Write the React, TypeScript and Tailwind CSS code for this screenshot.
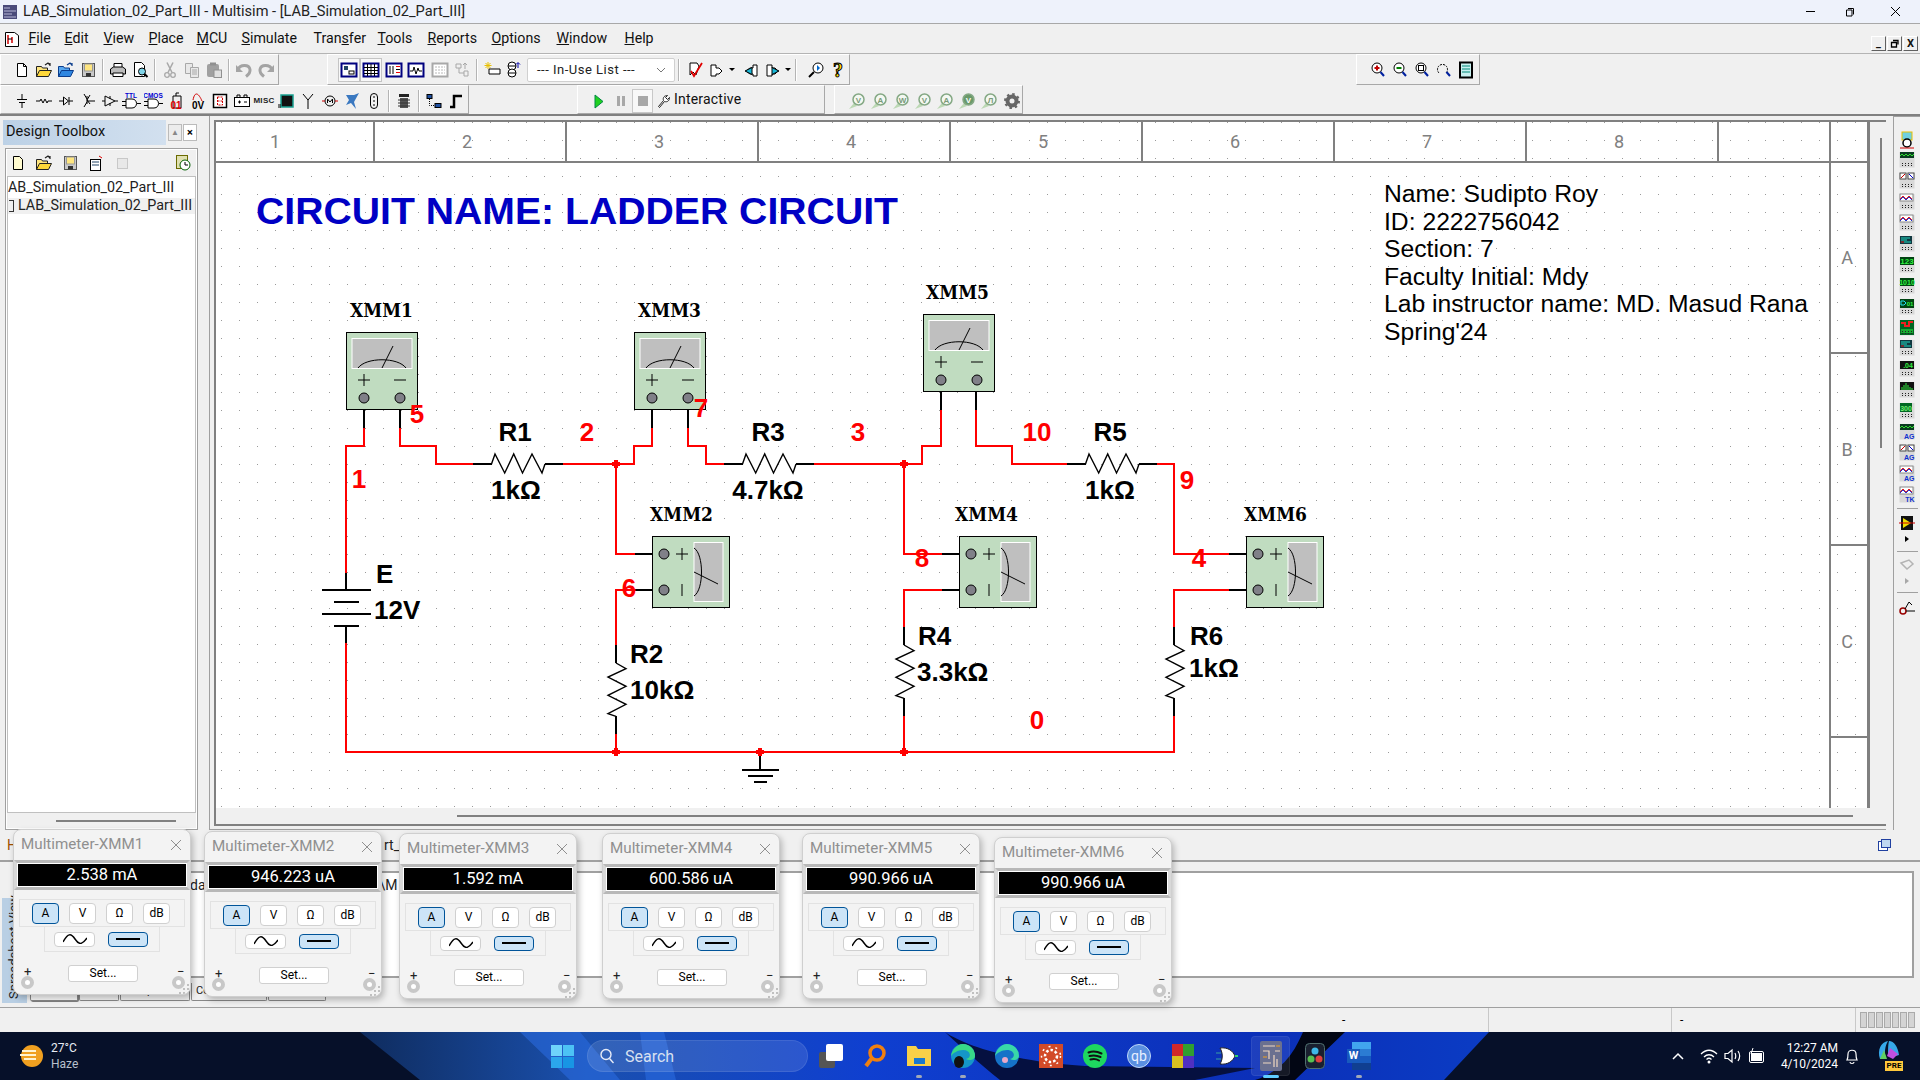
import React from 'react';

const F = "Liberation Sans";
const Svg = ({ children, w = 18, h = 18 }: { children?: React.ReactNode; w?: number; h?: number }) => (
  <svg width={w} height={h} viewBox={`0 0 ${w} ${h}`} className="block shrink-0">{children}</svg>
);
const Cell = ({ children, className = 'w-[22px]' }: { children?: React.ReactNode; className?: string }) => (
  <div className={`${className} h-[24px] flex items-center justify-center shrink-0`}>{children}</div>
);
const Sep = () => <div className="w-[2px] h-[22px] mx-[3px] bg-[#b4b4b4] border-r border-white shrink-0" />;
const Caret = () => <div className="w-[8px] flex justify-center shrink-0"><div className="w-0 h-0 border-x-[3px] border-x-transparent border-t-[3px] border-t-black" /></div>;
const panel = 'flex items-center border-t border-l border-white border-r border-r-[#a8a8a8] border-b border-b-[#a8a8a8] shrink-0';

const New = () => <Svg><path d="M4.5 2.5h6l3 3v10h-9z" fill="#fff" stroke="#000" /><path d="M10.5 2.5v3h3" fill="none" stroke="#000" /></Svg>;
const Folder = ({ a = '#ffe680', b = '#ffd83a', s = '#222' }: { a?: string; b?: string; s?: string }) => (
  <Svg><path d="M1.5 15.5v-10h5l1 1.5h5v8.500z" fill={a} stroke={s} /><path d="M1.500 15.500l3-6h12l-3 6z" fill={b} stroke={s} /><path d="M10 4l3-2 2 2M15 2v3" fill="none" stroke={s} strokeWidth="1.200" /></Svg>
);
const Save = () => <Svg><rect x="3.500" y="2.500" width="12" height="13" fill="#c8c8c8" stroke="#555" /><rect x="5.500" y="3" width="8" height="7" fill="#ffe680" stroke="#999" /><rect x="7" y="12" width="5" height="3.500" fill="#333" /></Svg>;
const Printer = () => <Svg><path d="M5 2.500h8v5H5z" fill="#fff" stroke="#000" /><path d="M1.500 8l3-2h9l3 2v5h-15z" fill="#bbb" stroke="#000" /><path d="M4 12h10v3.500H4z" fill="#fff" stroke="#000" /></Svg>;
const Preview = () => <Svg><path d="M3.500 1.500h7l3 3v11h-10z" fill="#fff" stroke="#000" /><circle cx="11" cy="10.500" r="3.500" fill="#7fd4e8" stroke="#000" /><path d="M13.500 13l3 3" stroke="#000" strokeWidth="2" /></Svg>;
const Cut = () => <Svg><path d="M6 1.500l5 10M12 1.500l-5 10" stroke="#a8a8a8" strokeWidth="1.500" fill="none" /><circle cx="6" cy="14" r="2.300" fill="none" stroke="#a8a8a8" strokeWidth="1.300" /><circle cx="12" cy="14" r="2.300" fill="none" stroke="#a8a8a8" strokeWidth="1.300" /></Svg>;
const Copy = () => <Svg><path d="M2.500 2.500h7v10h-7z" fill="#e8e8e8" stroke="#a8a8a8" /><path d="M7.500 6.500h8v10h-8z" fill="#e8e8e8" stroke="#a8a8a8" /><path d="M9 9h5M9 11h5M9 13h5" stroke="#a8a8a8" /></Svg>;
const Paste = () => <Svg><rect x="2" y="3" width="12" height="13" rx="2" fill="#a0a0a0" /><rect x="5" y="1.500" width="6" height="3" fill="#909090" /><rect x="9" y="9" width="7.500" height="7.500" fill="#e0e0e0" stroke="#909090" /></Svg>;
const Undo = ({ flip = false }: { flip?: boolean }) => (
  <Svg><g transform={flip ? 'matrix(-1 0 0 1 18 0)' : undefined}><path d="M3 8.500C5 3.500 14 3 15 8.500c.5 3-2 5.500-4 7" fill="none" stroke="#a4a4a4" strokeWidth="3" /><path d="M1 4v7h7z" fill="#a4a4a4" /></g></Svg>
);
const Box = ({ children, gray = false }: { children?: React.ReactNode; gray?: boolean }) => (
  <Svg><rect x="1.500" y="2.500" width="15" height="13" fill="#fff" stroke={gray ? '#a8a8a8' : '#00007f'} strokeWidth="2" />{children}</Svg>
);

const TopTool1 = () => (
  <div className={`${panel} w-[279px] h-[31px] pl-[10px] bg-[#f0f0f0]`}>
    <Cell><New /></Cell><Cell><Folder /></Cell><Cell><Folder a="#58a8f0" b="#2e86e0" s="#0a3c8c" /></Cell><Cell><Save /></Cell>
    <Sep />
    <Cell><Printer /></Cell><Cell><Preview /></Cell>
    <Sep />
    <Cell><Cut /></Cell><Cell><Copy /></Cell><Cell><Paste /></Cell>
    <Sep />
    <Cell><Undo /></Cell><Cell><Undo flip /></Cell>
  </div>
);

const TopTool2 = () => (
  <div className={`${panel} ml-[48px] w-[523px] h-[31px] pl-[10px] bg-[#f0f0f0]`}>
    <div className="w-[22px] h-[24px] flex items-center justify-center bg-[#f8f8f8] border border-[#c4c4c4] shrink-0"><Box><rect x="4" y="5" width="4" height="4" fill="#246" /><rect x="9" y="10" width="5" height="3" fill="#fff" stroke="#000" /></Box></div>
    <div className="w-[22px] h-[24px] flex items-center justify-center bg-[#f8f8f8] border border-[#c4c4c4] shrink-0"><Box><path d="M2 6.500h14M2 9.500h14M2 12.500h14M5.500 3v12M9 3v12M12.500 3v12" stroke="#000" /></Box></div>
    <div className="w-[1px] shrink-0" />
    <Cell><Box><path d="M5 5v8M8 5v8M11 5.500h4M11 8.500h4M11 11.500h4" stroke="#000" /><path d="M11 5.500h4M11 11.500h4" stroke="#e00" /></Box></Cell>
    <Cell><Box><path d="M3 10h3l1-4 2 7 2-6 1 3h3" stroke="#000" fill="none" /></Box></Cell>
    <div className="w-[2px] shrink-0" />
    <Cell><Box gray><path d="M4 6h10M4 9h10M4 12h10" stroke="#b8b8b8" strokeDasharray="2 1" /></Box></Cell>
    <Cell><Svg><path d="M3 3h5v4H3zM11 10h4v5h-4zM6 7v5h5M12 2v6M14 4l-2-2-2 2" fill="none" stroke="#a8a8a8" /></Svg></Cell>
    <Sep />
    <Cell><Svg><path d="M6 8h11v5H6z" fill="#fff" stroke="#000" /><path d="M5 1v7M1.500 4.500h7M2.500 2l5 5M7.500 2l-5 5" stroke="#e8c000" /></Svg></Cell>
    <Cell><Svg><circle cx="7" cy="5" r="4" fill="#fff" stroke="#000" /><circle cx="7" cy="12" r="4" fill="#fff" stroke="#000" /><path d="M3 5h8M3 12h8" stroke="#000" /><path d="M13 7V2M11 3.500l2-2 2 2" stroke="#00a" fill="none" /></Svg></Cell>
    <div className="w-[148px] h-[24px] ml-[2px] bg-white border border-[#d0d0d0] rounded-[2px] flex items-center pl-[9px] pr-[8px] justify-between shrink-0 text-[13px] tracking-[0.5px] text-[#222]">
      <span>--- In-Use List ---</span>
      <svg width="10" height="6" viewBox="0 0 10 6"><path d="M1 1l4 4 4-4" fill="none" stroke="#777" /></svg>
    </div>
    <Sep />
    <div className="w-[1px] shrink-0" />
    <Cell><Svg><path d="M4 2h7l2 3-3 9-3-3-3 3z" fill="#fff" stroke="#000" /><path d="M5 10l3 5 8-13" stroke="#e00000" strokeWidth="1.800" fill="none" /></Svg></Cell>
    <Cell><Svg><path d="M3 4h5v3h3l3 3-3 3H8v2H3z" fill="#fff" stroke="#000" /></Svg></Cell>
    <Caret />
    <div className="w-[4px] shrink-0" />
    <Cell><Svg><path d="M15 4h-4v3H8L4 10l4 3h3v2h4z" fill="#fff" stroke="#000" /><path d="M10 6.500L3 10l7 3.500z" fill="#18b8d8" stroke="#000" /></Svg></Cell>
    <Cell><Svg><path d="M3 4h5v3h3l3 3-3 3H8v2H3z" fill="#fff" stroke="#000" /><path d="M8 6.500l7 3.500-7 3.500z" fill="#18b8d8" stroke="#000" /></Svg></Cell>
    <Caret />
    <Sep />
    <div className="w-[5px] shrink-0" />
    <Cell><Svg><circle cx="11" cy="7" r="5" fill="#fff" stroke="#000" /><path d="M10 4l3 3-3 3z" fill="#06c" /><path d="M7 11l-5 5" stroke="#000" strokeWidth="2" /></Svg></Cell>
    <Cell><span className="font-['Liberation_Serif'] font-bold text-[20px] leading-none text-[#ffe000] [-webkit-text-stroke:1px_#000]">?</span></Cell>
  </div>
);

const Zoomer = ({ kind }: { kind: string }) => (
  <Svg>
    <circle cx="8" cy="7" r="5" fill="#fff" stroke="#000" />
    {kind === 'p' && <path d="M5.500 7h5M8 4.500v5" stroke="#c00000" strokeWidth="2" />}
    {kind === 'm' && <path d="M5.500 7h5" stroke="#008000" strokeWidth="2" />}
    {kind === 'a' && <rect x="5.500" y="4.500" width="5" height="5" fill="none" stroke="#000" />}
    <path d="M11.500 11l3.500 4" stroke="#00209f" strokeWidth="2" />
  </Svg>
);

const ZoomTool = () => (
  <div className={`${panel} ml-[506px] w-[124px] h-[31px] pl-[10px] bg-[#f0f0f0]`}>
    <Cell><Zoomer kind="p" /></Cell><Cell><Zoomer kind="m" /></Cell><Cell><Zoomer kind="a" /></Cell>
    <Cell><Svg><path d="M4 12A5 5 0 1 1 11 12" fill="none" stroke="#000" strokeDasharray="2 1" /><path d="M11.500 11l3.500 4" stroke="#00209f" strokeWidth="2" /></Svg></Cell>
    <Cell><Svg><rect x="3" y="1.500" width="12" height="15" fill="#c8f0f0" stroke="#000" strokeWidth="2" /><path d="M5 5h8M5 8h8M5 11h8" stroke="#087" /></Svg></Cell>
  </div>
);

const Stroke = ({ children }: { children?: React.ReactNode }) => <Svg><g fill="none" stroke="#000">{children}</g></Svg>;
const Gate = ({ label, color = '#0000d0' }: { label: string; color?: string }) => (
  <Svg w={20} h={18}>
    <text x="9" y="5.500" fontSize="6.500" fontWeight="700" fontFamily={F} fill={color} textAnchor="middle">{label}</text>
    <path d="M4 7h6c6 0 6 9 0 9H4zM0 9.500h4M0 13.500h4M15 11.500h4" fill="#fff" stroke="#000" />
  </Svg>
);
const Analysis = ({ t, k = 'l' }: { t: string; k?: string }) => (
  <Svg w={20} h={18}>
    <path d="M1 17l5-6 3 3z" fill="#bcd8b4" />
    <circle cx="10.500" cy="7.500" r={5.500} fill={k === 'd' ? '#6a9a6a' : '#f4f8f2'} stroke="#84a884" strokeWidth="1.500" />
    <text x="10.500" y="10.500" textAnchor="middle" fontSize="8" fontWeight="700" fontFamily={F} fill={k === 'd' ? '#fff' : '#7a9a7a'}>{t}</text>
  </Svg>
);

const BottomTools = () => (
  <div className="flex h-[31px] border-b-2 border-b-[#808080] shrink-0">
    <div className={`${panel} w-[469px] h-[29px] pl-[10px] pt-[2px]`}>
      <Cell><Stroke><path d="M9 2v5M4 7.500h10M6 10.500h6M9 11v5" /></Stroke></Cell>
      <Cell><Stroke><path d="M1 9h4l1-2 2 4 2-4 2 4 1-2h4" /></Stroke></Cell>
      <Cell><Stroke><path d="M2 9h4M12 9h4M6.500 5v8l5-4zM12 5v8" /></Stroke></Cell>
      <Cell><Stroke><path d="M5 2l3 5M8 4v8M5 15l3-5M11 3l-3 5 3 4M8 9h8" /></Stroke></Cell>
      <Cell><Stroke><path d="M1 9h3M14 9h3M4 4v10l10-5zM9 4v3M9 11v3" /></Stroke></Cell>
      <Cell><Gate label="TTL" /></Cell>
      <Cell><Gate label="CMOS" /></Cell>
      <Cell><Svg><path d="M6 4h8v12H6zM9 4V1h3" fill="none" stroke="#000" /><text x="9" y="16.500" fontSize="10" fontWeight="700" fontFamily={F} fill="#e00000" textAnchor="middle">01</text></Svg></Cell>
      <Cell><Svg><path d="M4 8c2-10 6-6 9 1" fill="none" stroke="#d00000" /><text x="9" y="17" fontSize="10" fontWeight="700" fontFamily={F} fill="#000" textAnchor="middle">0V</text></Svg></Cell>
      <Cell><Svg><rect x="2.500" y="2.500" width="13" height="13" fill="#fff" stroke="#000" strokeWidth="1.500" /><path d="M6.500 5h5v8h-5zM6.500 9h5" fill="none" stroke="#d00000" strokeDasharray="2 1" /></Svg></Cell>
      <Cell><Svg><rect x="1.500" y="5.500" width="15" height="9" fill="#fff" stroke="#000" /><path d="M4 5V3h3v2M11 5V3h3v2M5 10h3M6.500 8.500v3M11 10h3" fill="none" stroke="#000" /></Svg></Cell>
      <Cell><span className="text-[8px] font-bold tracking-[0.3px] leading-none text-[#222] font-['Liberation_Sans']">MISC</span></Cell>
      <Cell><Svg><rect x="4" y="3" width="12" height="12" fill="#111" stroke="#18a090" strokeWidth="1.500" /><path d="M1 13h3M1 15h3" stroke="#000" /></Svg></Cell>
      <Cell><Stroke><path d="M9 8v9M9 8L4 2M9 8l5-6" /></Stroke></Cell>
      <Cell><Stroke><circle cx="9" cy="9" r="5" /><path d="M6.500 11V7l2.500 3 2.500-3v4" /><path d="M1 9h3M14 9h3" stroke="#c00" /></Stroke></Cell>
      <Cell><Svg><path d="M3 3h8l5-2-5 9 2 7-5-6-5 2 3-5z" fill="#3a78c0" /></Svg></Cell>
      <Cell><Stroke><rect x="5.500" y="1.500" width="7" height="15" rx="3.500" /><path d="M9 4v10" strokeDasharray="2 2" /></Stroke></Cell>
      <Sep />
      <Cell><Svg><rect x="5" y="6" width="8" height="10" fill="#555" /><path d="M3 8h12M3 11h12M3 14h12" stroke="#333" /><rect x="4" y="2" width="10" height="3" fill="#222" /></Svg></Cell>
      <Sep />
      <Cell><Svg><rect x="2" y="2.500" width="5" height="4" fill="#2050a0" stroke="#000" /><rect x="10" y="11.500" width="6" height="4" fill="#2050a0" stroke="#000" /><path d="M4.500 7v6.500H10" stroke="#000" strokeDasharray="1 1" fill="none" /></Svg></Cell>
      <Cell><Svg><path d="M3 15h4V4h8" fill="none" stroke="#000" strokeWidth="2.500" /></Svg></Cell>
    </div>
    <div className={`${panel} ml-[108px] w-[248px] h-[29px] pl-[10px] pt-[2px]`}>
      <Cell><Svg><path d="M5 3v13l8-6.500z" fill="#20d020" stroke="#084" /></Svg></Cell>
      <Cell><div className="flex gap-[2px]"><div className="w-[3px] h-[10px] bg-[#a8a8a8]" /><div className="w-[3px] h-[10px] bg-[#a8a8a8]" /></div></Cell>
      <div className="w-[21px] h-[24px] flex items-center justify-center border border-[#c8c8c8] bg-[#f8f8f8] shrink-0"><div className="w-[10px] h-[10px] bg-[#a8a8a8]" /></div>
      <div className="w-[2px]" />
      <Cell className="w-[18px]"><Svg w={14} h={14}><path d="M1.500 12.500l5-6c-1-3 1-5 4-5l-2 2 2 2 2-2c0 3-2 5-5 4l-5 6z" fill="#fff" stroke="#222" /></Svg></Cell>
      <span className="text-[14px] text-[#111] ml-[1px] -mt-[2px] tracking-[0.2px]">Interactive</span>
    </div>
    <div className={`${panel} ml-[9px] w-[189px] h-[29px] pl-[12px] pt-[2px]`}>
      <Cell><Analysis t="V" /></Cell><Cell><Analysis t="A" /></Cell><Cell><Analysis t="W" /></Cell>
      <Cell><Analysis t="V" /></Cell><Cell><Analysis t="A" /></Cell><Cell><Analysis t="V" k="d" /></Cell>
      <Cell><Analysis t="Л" /></Cell>
      <Cell><Svg><circle cx="9" cy="9" r="4.500" fill="none" stroke="#666" strokeWidth="4" /><circle cx="9" cy="9" r="7" fill="none" stroke="#666" strokeWidth="2" strokeDasharray="2.500 3" /></Svg></Cell>
    </div>
  </div>
);

const menus: [string, string, string, string][] = [
  ['', 'F', 'ile', 'w-[36px]'], ['', 'E', 'dit', 'w-[39px]'], ['', 'V', 'iew', 'w-[45px]'], ['', 'P', 'lace', 'w-[48px]'], ['', 'M', 'CU', 'w-[45px]'],
  ['', 'S', 'imulate', 'w-[72px]'], ['Tran', 's', 'fer', 'w-[64px]'], ['', 'T', 'ools', 'w-[50px]'], ['', 'R', 'eports', 'w-[64px]'], ['', 'O', 'ptions', 'w-[65px]'], ['', 'W', 'indow', 'w-[68px]'], ['', 'H', 'elp', 'w-[40px]'],
];

const MenuBar = () => (
  <div className="h-[30px] flex items-center bg-[#f0f0f0] border-b border-b-[#b4b4b4] pl-[4px] text-[14.200px] text-[#111] shrink-0">
    <div className="w-[24.500px] shrink-0"><Svg w={16} h={18}><path d="M1.500 2.500h9l4 3v11h-13z" fill="#fff" stroke="#000" /><path d="M4 5v9M8 7v6" stroke="#d00000" strokeWidth="1.500" /><path d="M4 9h4" stroke="#000" /></Svg></div>
    {menus.map(([a, b, c, w]) => (
      <div key={b + c} className={`${w} shrink-0`}>{a}<span className="underline">{b}</span>{c}</div>
    ))}
    <div className="ml-auto flex gap-[1px] pr-[2px] pt-[10px]">
      {['_', '', 'X'].map((t, i) => (
        <div key={i} className="w-[15px] h-[15px] border border-t-white border-l-white border-b-[#606060] border-r-[#606060] flex items-center justify-center text-[11px] font-bold leading-none bg-[#f0f0f0]">
          {t === '' ? <Svg w={9} h={9}><path d="M3 1.500h5v4M1.500 3.500h5v4.500h-5z" fill="none" stroke="#000" strokeWidth="1.300" /></Svg> : t}
        </div>
      ))}
    </div>
  </div>
);

const instY = ['wave', 'two', 'red', 'red', 'mix', '123', '1010', 'gate', 'logic', 'mix', 'num', 'bars', 'num2', 'wave', 'two', 'red', 'red'];
const Inst = ({ t, i }: { t: string; i: number }) => {
  const tail = i === 13 || i === 14 || i === 15 ? 'AG' : i === 16 ? 'TK' : '';
  return (
    <Svg w={16} h={18}>
      <rect x="0.500" y="1" width="15" height="15.500" fill="#d8d8d8" />
      {t === 'wave' && <><rect x="1" y="1" width="14" height="6" fill="#0a3a20" /><path d="M1 5l2-2 2 2 2-2 2 2 2-2 2 2 2-2" stroke="#30e030" fill="none" /></>}
      {t === 'two' && <><rect x="1" y="1" width="6" height="6" fill="#fff" stroke="#444" /><rect x="9" y="1" width="6" height="6" fill="#fff" stroke="#444" /><path d="M2 6l4-4" stroke="#c00" /><path d="M10 2l4 4" stroke="#00c" /></>}
      {t === 'red' && <><rect x="1" y="1" width="13" height="7" fill="#fff" stroke="#888" /><path d="M1 6l3-3 3 3 3-3 3 3" stroke="#e02020" fill="none" /><path d="M1 7l3-3 3 3 3-3 3 3" stroke="#2030d0" fill="none" /></>}
      {t === 'mix' && <><rect x="1" y="1" width="12" height="8" fill="#103840" /><path d="M2 3h9M2 5h6M5 7h7" stroke="#20d8c0" /><path d="M2 7h3" stroke="#e02020" /></>}
      {t === '123' && <><rect x="1" y="1" width="14" height="8" fill="#041" /><text x="8" y="8" textAnchor="middle" fontSize="8" fontWeight="700" fontFamily={F} fill="#30f040">123</text></>}
      {t === '1010' && <><rect x="1" y="1" width="14" height="8" fill="#041" /><text x="8" y="8" textAnchor="middle" fontSize="7" fontWeight="700" fontFamily={F} fill="#30f040">1010</text></>}
      {t === 'gate' && <><rect x="1" y="1" width="14" height="9" fill="#041" /><path d="M2 3h3l2 2-2 2H2z" fill="none" stroke="#20e0f0" /><text x="11" y="8" textAnchor="middle" fontSize="6" fontWeight="700" fontFamily={F} fill="#30f040">01</text></>}
      {t === 'logic' && <><rect x="1" y="1" width="14" height="15" fill="#062" /><path d="M2 4h4v3h4V3h4" stroke="#f02020" strokeWidth="2" fill="none" /><path d="M2 11h12M2 13h12" stroke="#30f040" /></>}
      {t === 'num' && <><rect x="1" y="1" width="14" height="8" fill="#111" /><text x="9" y="8" textAnchor="middle" fontSize="7" fontWeight="700" fontFamily={F} fill="#30f040">.04</text></>}
      {t === 'bars' && <><rect x="1" y="1" width="14" height="8" fill="#111" /><path d="M3 9V6M5 9V4M7 9V2M9 9V4M11 9V6M13 9V7" stroke="#30f040" /></>}
      {t === 'num2' && <><rect x="1" y="1" width="12" height="9" fill="#062" /><text x="7" y="8.500" textAnchor="middle" fontSize="7" fontWeight="700" fontFamily={F} fill="#70f070">300</text></>}
      {tail
        ? <text x="15.500" y="16" textAnchor="end" fontSize="7" fontWeight="700" fontFamily={F} fill="#1030d0">{tail}</text>
        : <path d="M3 12.500h1M6 12.500h1M9 12.500h1M12 12.500h1M3 14.500h1M6 14.500h1M9 14.500h1M12 14.500h1" stroke="#222" />}
    </Svg>
  );
};

const RightTools = () => (
  <div className="w-[27px] ml-[7px] border-l border-t border-l-[#a0a0a0] border-t-[#a0a0a0] flex flex-col items-center pt-[12px] shrink-0">
    <div className="h-[21px] flex items-center shrink-0"><Svg w={16} h={18}><rect x="3" y="1" width="10" height="8" fill="#70d0e0" stroke="#e8c000" /><circle cx="8" cy="12" r="4" fill="#fff" stroke="#000" strokeWidth="1.500" /><path d="M1 17h14" stroke="#d00000" /></Svg></div>
    {instY.map((t, i) => <div key={i} className="h-[20.900px] flex items-center shrink-0"><Inst t={t} i={i} /></div>)}
    <div className="w-[21px] h-[1px] bg-[#a0a0a0] mt-[3px] shrink-0" />
    <div className="h-[27px] flex items-center shrink-0"><Svg w={16} h={16}><rect x="2" y="1" width="12" height="14" fill="#111" /><path d="M4 3l8 5-8 5z" fill="#f0e000" /><path d="M0 8h16" stroke="#c00" /></Svg></div>
    <div className="w-0 h-0 border-y-[3px] border-y-transparent border-l-[4px] border-l-black" />
    <div className="w-[21px] h-[1px] bg-[#a0a0a0] mt-[9px] shrink-0" />
    <div className="h-[26px] flex items-center shrink-0"><Svg w={16} h={16}><path d="M2 6l8-3 4 4-6 5z" fill="none" stroke="#b4b4b4" strokeWidth="1.500" /></Svg></div>
    <div className="w-0 h-0 border-y-[3px] border-y-transparent border-l-[4px] border-l-[#a8a8a8]" />
    <div className="w-[21px] h-[1px] bg-[#a0a0a0] mt-[8px] shrink-0" />
    <div className="h-[28px] flex items-center shrink-0"><Svg w={16} h={16}><circle cx="4" cy="12" r="3" fill="none" stroke="#900" strokeWidth="1.500" /><path d="M6 10l4-7 3 3M7 12h9" fill="none" stroke="#000" /></Svg></div>
  </div>
);

const LeftPanel = () => (
  <div className="w-[209px] shrink-0 flex flex-col pt-[4px] pl-[3px] pr-[11px]">
    <div className="flex items-center h-[25px] shrink-0">
      <div className="w-[163px] h-[25px] bg-gradient-to-r from-[#bcd1e6] to-[#d2e0ef] flex items-center pl-[3px] pb-[2px] text-[14.500px] text-[#111]">Design Toolbox</div>
      <div className="w-[14px] h-[17px] ml-[2px] border border-[#bbb] bg-[#ececec] text-[8px] text-[#888] flex items-center justify-center">▲</div>
      <div className="w-[14px] h-[17px] ml-[1px] border border-[#bbb] bg-white text-[11px] font-bold flex items-center justify-center leading-none">×</div>
    </div>
    <div className="ml-[2px] mt-[3px] h-[684px] border border-[#a0a0a0] shadow-[inset_0_0_0_1px_#fff] flex flex-col">
      <div className="h-[27px] flex items-center pl-[3px] gap-[8px] shrink-0">
        <Svg><path d="M4.500 2.500h6l3 3v10h-9z" fill="#fffbd0" stroke="#000" /></Svg>
        <Folder />
        <Save />
        <Svg><rect x="3.500" y="5.500" width="10" height="11" fill="#fff" stroke="#000" /><path d="M5 8h7M5 11h7" stroke="#246" /><path d="M12 2l3 2" stroke="#d00" /></Svg>
        <Svg><rect x="4.500" y="4.500" width="10" height="10" fill="#e8e8e8" stroke="#c8c8c8" /></Svg>
        <div className="ml-[35px]"><Svg><rect x="2.500" y="1.500" width="11" height="13" fill="#e0e0b0" stroke="#6a6a00" /><circle cx="11" cy="11" r="5" fill="#fff" stroke="#006000" /><path d="M11 8v3h3" fill="none" stroke="#000" /></Svg></div>
      </div>
      <div className="mx-[1px] h-[637px] bg-white border border-[#c0c0c0] overflow-hidden text-[14.300px] text-[#222] shrink-0">
        <div className="h-[20px] pt-[1px] flex items-center whitespace-nowrap">AB_Simulation_02_Part_III</div>
        <div className="h-[16px] mt-[1px] bg-[#f0f0f0] flex items-center whitespace-nowrap pl-[1px]"><span className="w-[5px] h-[12px] border border-[#333] border-l-0 mr-[4px]" />LAB_Simulation_02_Part_III</div>
      </div>
      <div className="flex-1 flex items-center pl-[50px]"><div className="w-[120px] h-[2px] bg-[#808080]" /></div>
    </div>
  </div>
);

const dotPath = (() => {
  let d = '';
  for (let i = 0; i < 94; i++) {
    for (let j = 0; j < 40; j++) {
      const x = Math.round(220.9 + i * 17.96);
      const y = Math.round(122.3 + 18 * j);
      d += `M${x} ${y}h1v1h-1z`;
    }
  }
  return d;
})();

const W = ({ p }: { p: string }) => <polyline points={p} fill="none" stroke="#ff0000" strokeWidth="2" shapeRendering="crispEdges" />;
const K = ({ p }: { p: string }) => <polyline points={p} fill="none" stroke="#000" strokeWidth="2" shapeRendering="crispEdges" />;
const RH = ({ x, y }: { x: number; y: number }) => {
  const o = [[18.5, 0], [22, -10], [31.7, 9], [40.7, -10], [49.5, 9], [59, -10], [69, 9], [72, 0]];
  return <>
    <K p={`${x},${y} ${x + 19},${y}`} />
    <polyline points={o.map(([a, b]) => `${x + a},${y + b}`).join(' ')} fill="none" stroke="#000" strokeWidth="1.400" />
    <K p={`${x + 72},${y} ${x + 90},${y}`} />
  </>;
};
const RV = ({ x, y }: { x: number; y: number }) => {
  const o = [[0, 18], [10, 23.600], [-8, 32], [10, 41.300], [-8, 50.300], [10, 59.300], [-8, 68.600], [0, 71.300]];
  return <>
    <K p={`${x},${y} ${x},${y + 18}`} />
    <polyline points={o.map(([a, b]) => `${x + a},${y + b}`).join(' ')} fill="none" stroke="#000" strokeWidth="1.400" />
    <K p={`${x},${y + 71} ${x},${y + 89}`} />
  </>;
};
const Term = ({ x, y }: { x: number; y: number }) => <circle cx={x} cy={y} r="5" fill="#808088" stroke="#000" strokeWidth="1" />;
const MV = ({ x, y }: { x: number; y: number }) => (
  <>
    <rect x={x + 0.5} y={y + 0.5} width="71" height="77" fill="#c0dcc0" stroke="#000" />
    <rect x={x + 6} y={y + 6.5} width="60" height="30" fill="#bfbfbf" stroke="#fff" />
    <path d={`M${x + 12} ${y + 36}C${x + 20} ${y + 25} ${x + 52} ${y + 25} ${x + 60} ${y + 36}M${x + 36} ${y + 36}L${x + 47} ${y + 14}`} fill="none" stroke="#000" />
    <path d={`M${x + 12} ${y + 48}h12M${x + 18} ${y + 42}v12M${x + 48} ${y + 48}h12`} stroke="#000" />
    <Term x={x + 18} y={y + 66} /><Term x={x + 54} y={y + 66} />
  </>
);
const MH = ({ x, y }: { x: number; y: number }) => (
  <>
    <rect x={x + 0.5} y={y + 0.5} width="77" height="71" fill="#c0dcc0" stroke="#000" />
    <rect x={x + 42} y={y + 6.5} width="29" height="59" fill="#bfbfbf" stroke="#fff" />
    <path d={`M${x + 42} ${y + 12}C${x + 52} ${y + 18} ${x + 52} ${y + 54} ${x + 42} ${y + 60}M${x + 42} ${y + 36}L${x + 66} ${y + 48}`} fill="none" stroke="#000" />
    <path d={`M${x + 24} ${y + 18}h12M${x + 30} ${y + 12}v12M${x + 30} ${y + 48}v12`} stroke="#000" />
    <Term x={x + 12} y={y + 18} /><Term x={x + 12} y={y + 54} />
  </>
);
const T = ({ x, y, t, a = 'start', c = '#000', s = 26 }: { x: number; y: number; t: string; a?: 'start' | 'middle'; c?: string; s?: number }) => (
  <text x={x} y={y} textAnchor={a} fontFamily={F} fontWeight="700" fontSize={s} fill={c}>{t}</text>
);
const ML = ({ x, y, t }: { x: number; y: number; t: string }) => (
  <text x={x} y={y} textLength="63" lengthAdjust="spacingAndGlyphs" fontFamily="DejaVu Serif" fontWeight="700" fontSize="18.500" fill="#000">{t}</text>
);
const Dot = ({ x, y }: { x: number; y: number }) => <path d={`M${x - 4} ${y - 2}h2v-2h4v2h2v4h-2v2h-4v-2h-2z`} fill="#ff0000" shapeRendering="crispEdges" />;

const Circuit = () => (
  <svg viewBox="216 122 1654 686" width="1654" height="686" className="absolute left-0 top-0 block">
    <path d={dotPath} fill="#9a9a9a" shapeRendering="crispEdges" />
    <text x="256" y="224" textLength="642" lengthAdjust="spacingAndGlyphs" fontFamily={F} fontWeight="700" fontSize="37" fill="#0000c4">CIRCUIT NAME: LADDER CIRCUIT</text>

    {['Name: Sudipto Roy', 'ID: 2222756042', 'Section: 7', 'Faculty Initial: Mdy', 'Lab instructor name: MD. Masud Rana', "Spring'24"].map((t, i) => (
      <text key={t} x="1384" y={202 + i * 27.600} fontFamily={F} fontSize="24.700" fill="#000">{t}</text>
    ))}

    <W p="364,428 364,446 346,446 346,573" />
    <K p="364,398 364,428" />
    <K p="346,573 346,590" />
    <path d="M322 590h49M334 602h25M322 614h49M334 626h25" stroke="#000" strokeWidth="2" shapeRendering="crispEdges" />
    <K p="346,626 346,643" />
    <W p="346,643 346,752 1174,752 1174,716" />
    <W p="400,428 400,446 436,446 436,464 473,464" />
    <K p="400,398 400,428" />
    <RH x={473} y={464} />
    <W p="563,464 634,464 634,446 652,446 652,428" />
    <K p="652,398 652,428" />
    <W p="688,428 688,446 706,446 706,464 724,464" />
    <K p="688,398 688,428" />
    <RH x={724} y={464} />
    <W p="814,464 922,464 922,446 941,446 941,410" />
    <K p="941,380 941,410" />
    <W p="976,410 976,446 1012,446 1012,464 1067,464" />
    <K p="976,380 976,410" />
    <RH x={1067} y={464} />
    <W p="1157,464 1174,464 1174,554 1229,554" />
    <K p="1229,554 1258,554" />
    <K p="1229,590 1258,590" />
    <W p="1229,590 1174,590 1174,627" />
    <RV x={1174} y={627} />
    <W p="616,464 616,554 635,554" />
    <K p="635,554 664,554" />
    <K p="635,590 664,590" />
    <W p="635,590 616,590 616,645" />
    <RV x={616} y={645} />
    <W p="616,734 616,752" />
    <W p="904,464 904,554 942,554" />
    <K p="942,554 971,554" />
    <K p="942,590 971,590" />
    <W p="942,590 904,590 904,627" />
    <RV x={904} y={627} />
    <W p="904,716 904,752" />
    <K p="760,752 760,770" />
    <path d="M742 770h37M748 776h25M754 782h13" stroke="#000" strokeWidth="2" shapeRendering="crispEdges" />
    <Dot x={616} y={464} /><Dot x={904} y={464} /><Dot x={616} y={752} /><Dot x={904} y={752} /><Dot x={760} y={752} />

    <MV x={346} y={332} /><MV x={634} y={332} /><MV x={923} y={314} />
    <MH x={652} y={536} /><MH x={959} y={536} /><MH x={1246} y={536} />

    <ML x={350} y={317} t="XMM1" /><ML x={638} y={317} t="XMM3" /><ML x={926} y={299} t="XMM5" />
    <ML x={650} y={521} t="XMM2" /><ML x={955} y={521} t="XMM4" /><ML x={1244} y={521} t="XMM6" />

    <T x={515} y={441} t="R1" a="middle" /><T x={516} y={499} t="1kΩ" a="middle" />
    <T x={768} y={441} t="R3" a="middle" /><T x={768} y={499} t="4.7kΩ" a="middle" />
    <T x={1110} y={441} t="R5" a="middle" /><T x={1110} y={499} t="1kΩ" a="middle" />
    <T x={630} y={663} t="R2" /><T x={630} y={699} t="10kΩ" />
    <T x={918} y={645} t="R4" /><T x={917} y={681} t="3.3kΩ" />
    <T x={1190} y={645} t="R6" /><T x={1189} y={677} t="1kΩ" />
    <T x={376} y={583} t="E" /><T x={374} y={619} t="12V" />

    {([[359, 488, '1'], [587, 441, '2'], [858, 441, '3'], [1199, 567, '4'], [417, 423, '5'], [629, 597, '6'], [701, 417, '7'], [922, 567, '8'], [1187, 489, '9'], [1037, 441, '10'], [1037, 729, '0']] as [number, number, string][]).map(([x, y, t]) => (
      <T key={t} x={x} y={y} t={t} a="middle" c="#ff0000" />
    ))}
  </svg>
);

const cols = [
  ['1', 'w-[159px] pr-[39px]'], ['2', 'w-[192px] pr-[6px]'], ['3', 'w-[192px] pr-[6px]'], ['4', 'w-[192px] pr-[6px]'], ['5', 'w-[192px] pr-[6px]'], ['6', 'w-[192px] pr-[6px]'], ['7', 'w-[192px] pr-[6px]'], ['8', 'w-[192px] pr-[6px]'],
];

const CanvasPanel = () => (
  <div className="w-[1677px] h-[714px] shrink-0 border-l border-b border-[#a0a0a0] pl-[4px] pt-[4px] pb-[3px] flex flex-col">
    <div className="h-[706px] flex flex-col border-l-2 border-t-2 border-b-2 border-[#808080]">
      <div className="relative w-[1654px] h-[686px] bg-white overflow-hidden shrink-0 flex">
        <Circuit />
        <div className="relative flex flex-col w-[1613px] h-[686px] shrink-0">
          <div className="flex h-[41px] border-b-2 border-[#808080] shrink-0">
            {cols.map(([t, w], i) => (
              <div key={i} className={`${w} shrink-0 h-full border-r-2 border-[#808080] flex items-center justify-center text-[18px] text-[#808080]`}>{t}</div>
            ))}
          </div>
        </div>
        <div className="relative flex flex-col w-[41px] h-[686px] shrink-0 border-l-2 border-r-[3px] border-[#808080]">
          <div className="h-[41px] border-b-2 border-[#808080] shrink-0" />
          {[['A', 'h-[191px]'], ['B', 'h-[192px]'], ['C', 'h-[192px]'], ['', 'flex-1']].map(([t, h], i) => (
            <div key={i} className={`${h} border-b-2 border-[#808080] last:border-b-0 flex items-center justify-center pr-[4px] text-[18px] text-[#808080]`}>{t}</div>
          ))}
        </div>
      </div>
      <div className="w-full flex-1 bg-[#f0f0f0] flex items-center pl-[241px]"><div className="w-[1396px] h-[2px] bg-[#808080]" /></div>
    </div>
  </div>
);

const CanvasWithScroll = () => (
  <div className="relative shrink-0">
    <CanvasPanel />
    <div className="absolute left-[1671px] top-[22px] w-[2px] h-[310px] bg-[#808080]" />
  </div>
);

const DocTabs = () => (
  <div className="h-[32px] bg-[#f0f0f0] border-b-2 border-[#a0a0a0] flex items-center text-[14px] text-[#222] shrink-0 relative overflow-hidden">
    <span className="ml-[7px] text-[#a05000]">H</span>
    <span className="ml-[367px]">rt_</span>
    <div className="ml-auto mr-[29px]"><Svg w={14} h={14}><rect x="1.500" y="3.500" width="9" height="9" fill="#fff" stroke="#2040a0" /><rect x="4.500" y="1.500" width="9" height="8" fill="#c0d8f0" stroke="#2040a0" /></Svg></div>
  </div>
);

const Spreadsheet = () => (
  <div className="h-[146px] bg-[#f0f0f0] flex shrink-0 border-b border-[#a0a0a0]">
    <div className="ml-[2px] mt-[36px] w-[25px] h-[105px] bg-[#b9cfe4] flex items-stretch justify-start shrink-0">
      <div className="[writing-mode:vertical-rl] rotate-180 text-[13px] whitespace-nowrap text-[#222] pt-[4px] ml-[2px] h-full">Spreadsheet View</div>
    </div>
    <div className="flex-1 flex flex-col mr-[6px] ml-[3px] mt-[9px] min-w-0">
      <div className="h-[107px] bg-white border-2 border-[#a0a0a0] flex items-start pt-[2px] text-[14px] text-[#222] shrink-0">
        <span className="ml-[158px]">da</span>
        <span className="ml-[174px]">\M</span>
      </div>
      <div className="flex mt-[5px] h-[18px] text-[11px] text-[#222] gap-[1px] whitespace-nowrap">
        <div className="w-[48px] border border-[#888] border-t-0 bg-[#f8f8f8] pl-[4px] rounded-b-[2px] shadow-[1px_1px_0_#808080]">Results</div>
        <div className="w-[40px] border border-[#888] border-t-0 pl-[4px] rounded-b-[2px]">Nets</div>
        <div className="w-[70px] border border-[#888] border-t-0 pl-[3px] rounded-b-[2px]">Components</div>
        <div className="w-[76px] border border-[#888] border-t-0 pl-[4px] rounded-b-[2px]">Copper layers</div>
        <div className="w-[58px] border border-[#888] border-t-0 pl-[4px] rounded-b-[2px]">Simulation</div>
      </div>
    </div>
  </div>
);

const Status = () => (
  <div className="h-[24px] bg-[#f0f0f0] flex items-center text-[12px] text-black shrink-0">
    <div className="w-[1489px] h-full border-r border-[#c8c8c8] pl-[1342px] flex items-center">-</div>
    <div className="w-[183px] h-full border-r border-[#c8c8c8]" />
    <div className="w-[184px] h-full border-r border-[#c8c8c8] pl-[8px] flex items-center">-</div>
    <div className="flex ml-[4px] gap-[1px]">
      {[0, 1, 2, 3, 4, 5, 6].map(i => <div key={i} className="w-[7px] h-[16px] bg-[#d4d4d4] border border-[#aaa]" />)}
    </div>
  </div>
);

const Wall = () => (
  <svg viewBox="0 0 1920 48" width="1920" height="48" className="absolute left-0 top-0 block" preserveAspectRatio="none">
    <defs>
      <linearGradient id="wa" x1="0" x2="1" y1="0" y2="0"><stop offset="0" stopColor="#0f2c5e" /><stop offset="0.2" stopColor="#1a50ae" /><stop offset="0.45" stopColor="#0f3fd0" /><stop offset="0.8" stopColor="#0b2fb8" /><stop offset="1" stopColor="#0b3cc4" /></linearGradient>
    </defs>
    <rect width="1920" height="48" fill="#061029" />
    <path d="M360 0H1489L1444 48H420z" fill="url(#wa)" />
    <path d="M520 0h60l40 48h-50zM640 0h24l12 48h-30z" fill="#2a6ae0" opacity=".6" />
    <path d="M945 0c20 14 70 30 140 34l170 2-60 12H1000c-20-16-40-34-55-48z" fill="#051040" />
    <path d="M1255 48c30-10 40-30 48-48h42l-50 48z" fill="#020614" />
  </svg>
);

const AppIcon = ({ children }: { children?: React.ReactNode }) => <div className="w-[44px] flex items-center justify-center relative h-full shrink-0">{children}</div>;
const Dotline = ({ blue = false }: { blue?: boolean }) => <div className={`absolute bottom-[2px] left-1/2 -translate-x-1/2 rounded-full h-[3px] ${blue ? 'w-[16px] bg-[#60cdff]' : 'w-[6px] bg-[#a0a8b8]'}`} />;

const Taskbar = () => (
  <div className="h-[48px] relative overflow-hidden shrink-0 flex items-center text-white">
    <Wall />
    <div className="relative w-[540px] h-full flex items-center pl-[19px] shrink-0">
      <Svg w={24} h={24}><circle cx="13" cy="12" r="11" fill="#f0a020" /><path d="M3 7h14M1 11h16M5 15h12" stroke="#fff3d0" strokeWidth="2" /></Svg>
      <div className="ml-[8px] text-[12px] leading-[16px] text-[#e8ecf4]"><div>27°C</div><div className="text-[#b8c0cc]">Haze</div></div>
    </div>
    <div className="relative w-[44px] flex items-center justify-center shrink-0">
      <div className="grid grid-cols-2 gap-[1px] w-[23px] h-[23px]">
        <div className="bg-[#6fd4fb]" /><div className="bg-[#4cc2f5]" /><div className="bg-[#2ba6ec]" /><div className="bg-[#1895e4]" />
      </div>
    </div>
    <div className="relative ml-[3px] w-[221px] h-[32px] rounded-full bg-[#ffffff1c] border border-[#ffffff18] flex items-center pl-[11px] shrink-0">
      <Svg w={16} h={16}><circle cx="7" cy="6.500" r="5" fill="none" stroke="#e8ecf8" strokeWidth="1.400" /><path d="M10.500 10.500l4 4.500" stroke="#e8ecf8" strokeWidth="1.400" /></Svg>
      <span className="ml-[10px] text-[16px] pt-[2px] text-[#d8e0f0]">Search</span>
    </div>
    <div className="relative h-full ml-[1px] flex shrink-0">
      <AppIcon><div className="relative w-[24px] h-[24px]"><div className="absolute left-0 top-[8px] w-[16px] h-[16px] bg-[#555] rounded-[2px]" /><div className="absolute right-0 top-0 w-[17px] h-[17px] bg-white rounded-[2px]" /></div></AppIcon>
      <AppIcon><Svg w={26} h={26}><circle cx="15" cy="10" r="7" fill="none" stroke="#f08010" strokeWidth="3.500" /><path d="M10 15l-6 8" stroke="#f08010" strokeWidth="4" /></Svg></AppIcon>
      <AppIcon><Svg w={26} h={26}><path d="M1 3h9l2 3h13v17H1z" fill="#f8d048" /><rect x="8" y="15" width="11" height="6" fill="#1878d0" /></Svg><Dotline /></AppIcon>
      <AppIcon><Svg w={26} h={26}><circle cx="13" cy="13" r="12" fill="#1596c8" /><path d="M13 1a12 12 0 0 1 12 12c0 4-6 5-9 3 6-1 5-9-3-9-5 0-10 3-12 6C2 7 7 1 13 1z" fill="#38d888" /><ellipse cx="9" cy="19" rx="5" ry="6" fill="#111" /></Svg><Dotline /></AppIcon>
      <AppIcon><Svg w={26} h={26}><circle cx="13" cy="13" r="12" fill="#1572c8" /><path d="M13 1a12 12 0 0 1 12 12c0 4-6 5-9 3 6-1 5-9-3-9-5 0-10 3-12 6C2 7 7 1 13 1z" fill="#38d8a8" /><circle cx="11" cy="17" r="3" fill="#e8a8c8" /></Svg></AppIcon>
      <AppIcon><Svg w={24} h={24}><rect width="24" height="24" fill="#d24a28" /><circle cx="12" cy="12" r="6" fill="none" stroke="#fff" strokeWidth="2.500" strokeDasharray="2.500 2" /><circle cx="12" cy="12" r="9.500" fill="none" stroke="#fff" strokeWidth="1.500" strokeDasharray="2 5" /></Svg></AppIcon>
      <AppIcon><Svg w={24} h={24}><circle cx="12" cy="12" r="12" fill="#1ed760" /><path d="M5.500 8.500c4-1.500 9-1 13 1M6.500 12c3.500-1 7.500-.7 11 1M7.500 15.500c3-.8 6-.5 8.500 1" stroke="#111" strokeWidth="2" fill="none" strokeLinecap="round" /></Svg></AppIcon>
      <AppIcon><div className="w-[24px] h-[24px] rounded-full bg-[#5a8fe0] border border-[#c0d8f8] text-[#e8f0ff] text-[14px] flex items-center justify-center leading-none">qb</div></AppIcon>
      <AppIcon><div className="grid grid-cols-2 w-[22px] h-[24px]"><div className="bg-[#d02828]" /><div className="bg-[#30a030]" /><div className="bg-[#d8c020]" /><div className="bg-[#5030c0]" /></div></AppIcon>
      <AppIcon><Svg w={24} h={22}><path d="M5 3c8-1 13 3 15 8-2 5-7 9-15 8 3-5 3-11 0-16z" fill="#fff" stroke="#222" /><path d="M1 8h5M1 14h5" stroke="#38a0a0" /><path d="M20 11h3" stroke="#30d070" strokeWidth="2" /></Svg></AppIcon>
      <div className="w-[44px] h-full relative flex items-center justify-center shrink-0">
        <div className="absolute left-[2px] top-[4px] w-[39px] h-[40px] rounded-[4px] bg-[#ffffff14] border border-[#ffffff12]" />
        <div className="relative"><Svg w={22} h={30}><rect x="0" y="0" width="22" height="30" rx="2" fill="#6a7090" /><path d="M3 5h12M3 10h6v8M15 10h5M3 22h8M14 14v12M17 18v8" stroke="#f0d8c0" strokeWidth="1.200" fill="none" /><path d="M16 5h4M3 16h4" stroke="#f0a020" /></Svg></div>
        <Dotline blue />
      </div>
      <AppIcon><Svg w={20} h={26}><rect x="0.500" y="0.500" width="19" height="25" rx="4" fill="#1a2030" stroke="#507070" /><circle cx="10" cy="8" r="3.500" fill="#40b8e8" /><circle cx="6" cy="16" r="3.500" fill="#58c050" /><circle cx="14" cy="16" r="3.500" fill="#e04040" /></Svg></AppIcon>
      <AppIcon>
        <div className="relative w-[24px] h-[28px] flex"><div className="ml-[5px] w-[19px] h-[28px] flex flex-col"><div className="flex-1 bg-[#41a5ee]" /><div className="flex-1 bg-[#2b7cd3]" /><div className="flex-1 bg-[#185abd]" /><div className="flex-1 bg-[#103f91]" /></div>
          <div className="absolute left-0 top-[7px] w-[13px] h-[14px] bg-[#185abd] text-white text-[11px] font-bold flex items-center justify-center">W</div></div>
        <Dotline />
      </AppIcon>
    </div>
    <div className="relative ml-auto flex items-center h-full shrink-0">
      <Svg w={12} h={8}><path d="M1 7l5-5 5 5" fill="none" stroke="#fff" strokeWidth="1.500" /></Svg>
      <div className="ml-[16px]"><Svg w={18} h={16}><path d="M1 6c5-5 11-5 16 0M4 9c3-3 7-3 10 0M6.500 11.500c1.500-1.500 3.500-1.500 5 0" fill="none" stroke="#fff" strokeWidth="1.300" /><circle cx="9" cy="14" r="1.500" fill="#fff" /></Svg></div>
      <div className="ml-[6px]"><Svg w={18} h={16}><path d="M1 5.500h3l4-3.500v12l-4-3.500H1z" fill="none" stroke="#fff" strokeWidth="1.200" /><path d="M11 5c1 2 1 4 0 6M14 3c2 3 2 7 0 10" fill="none" stroke="#fff" strokeWidth="1.200" /></Svg></div>
      <div className="ml-[6px]"><Svg w={18} h={16}><rect x="1.500" y="3.500" width="14" height="11" rx="1.500" fill="none" stroke="#fff" /><rect x="3" y="5" width="11" height="8" fill="#fff" /><path d="M5 0L3 6h3l-1 3" stroke="#fff" fill="none" /></Svg></div>
      <div className="ml-[12px] w-[60px] text-[12px] leading-[16px] text-right text-white whitespace-nowrap"><div>12:27 AM</div><div>4/10/2024</div></div>
      <div className="ml-[6px]"><Svg w={16} h={18}><path d="M3 13c1-2 1-4 1-6 0-5 8-5 8 0 0 2 0 4 1 6zM6 15c0 2 4 2 4 0" fill="none" stroke="#fff" strokeWidth="1.200" /></Svg></div>
      <div className="ml-[17px] mr-[19px] relative w-[24px] h-[32px]">
        <Svg w={24} h={26}><path d="M3 19C0 10 4 2 11 1c-3 5-4 12-2 18zM12 1c5 0 9 6 10 14-4 2-8 1-11-1 0-5 0-9 1-13z" fill="#36a8e8" /><path d="M13 8l8 6-5 5-6-3z" fill="#c050e0" /><path d="M3 19l4-9 3 9z" fill="#60d060" /></Svg>
        <div className="absolute right-[-2px] bottom-[1px] w-[18px] h-[10px] bg-[#ffc83c] text-[8px] font-bold text-black leading-[10px] text-center">PRE</div>
      </div>
    </div>
  </div>
);

const Sine = () => <svg width="24" height="10" viewBox="0 0 24 10"><path d="M0 8c5-9 8-9 12-3s7 6 12-1" fill="none" stroke="#000" strokeWidth="1.500" /></svg>;

const Meter = ({ pos, name, value }: { pos: string; name: string; value: string }) => (
  <div className={`absolute ${pos} w-[178px] h-[166px] rounded-[8px] bg-[#f3f3f3] border border-[#cfcfcf] shadow-[2px_3px_6px_#00000040] overflow-hidden`}>
    <div className="h-[29px] mb-[1px] flex items-center justify-between pl-[7px] pr-[8px]">
      <span className="text-[15.200px] text-[#8f8f8f]">{name}</span>
      <svg width="12" height="12" viewBox="0 0 12 12"><path d="M1 1l10 10M11 1L1 11" stroke="#8f8f8f" /></svg>
    </div>
    <div className="h-[30px] border-y-[3px] border-y-[#b8b8b8] border-x-[3px] border-x-[#d8d8d8] p-[1px] bg-white">
      <div className="h-full bg-black text-white text-[16.500px] leading-[22px] text-center">{value}</div>
    </div>
    <div className="mx-[5px] mt-[9px] h-[28px] border border-[#e2e2e2] flex items-center pl-[12px] gap-[10px]">
      {['A', 'V', 'Ω', 'dB'].map((t, i) => (
        <div key={t} className={`w-[27px] h-[21px] rounded-[4px] border text-[12px] flex items-center justify-center ${i === 0 ? 'bg-[#cce4f7] border-[#005499]' : 'bg-white border-[#d0d0d0]'}`}>{t}</div>
      ))}
    </div>
    <div className="mx-[30px] h-[25px] border border-t-0 border-[#e2e2e2] flex items-center pl-[9px] gap-[13px]">
      <div className="w-[41px] h-[15px] rounded-[4px] bg-white border border-[#d0d0d0] flex items-center justify-center"><Sine /></div>
      <div className="w-[40px] h-[15px] rounded-[4px] bg-[#cce4f7] border border-[#005499] flex items-center justify-center"><div className="w-[24px] h-[2px] bg-black" /></div>
    </div>
    <div className="w-[70px] h-[17px] mt-[13px] ml-[54px] rounded-[3px] bg-white border border-[#d0d0d0] text-[12px] text-center leading-[15px]">Set...</div>
    <span className="absolute left-[10px] top-[133px] text-[13px] leading-[18px] text-[#222]">+</span>
    <span className="absolute left-[163px] top-[133px] text-[13px] leading-[18px] text-[#222]">−</span>
    <div className="absolute left-[7px] top-[146px] w-[13px] h-[13px] rounded-full border-[4px] border-[#c8c8c8] bg-white" />
    <div className="absolute left-[158px] top-[146px] w-[13px] h-[13px] rounded-full border-[4px] border-[#c8c8c8] bg-white" />
    <svg width="12" height="12" viewBox="0 0 12 12" className="absolute right-0 bottom-0"><path d="M9 2h2v2H9zM5 6h2v2H5zM9 6h2v2H9zM1 10h2v2H1zM5 10h2v2H5zM9 10h2v2H9z" fill="#c0c0c0" /></svg>
  </div>
);

const meters = [
  ['left-[13px] top-[829px]', 'Multimeter-XMM1', '2.538 mA'],
  ['left-[204px] top-[831px]', 'Multimeter-XMM2', '946.223 uA'],
  ['left-[399px] top-[833px]', 'Multimeter-XMM3', '1.592 mA'],
  ['left-[602px] top-[833px]', 'Multimeter-XMM4', '600.586 uA'],
  ['left-[802px] top-[833px]', 'Multimeter-XMM5', '990.966 uA'],
  ['left-[994px] top-[837px]', 'Multimeter-XMM6', '990.966 uA'],
];

export default function App() {
  return (
    <div className="relative w-[1920px] h-[1080px] overflow-hidden bg-[#f0f0f0] flex flex-col font-['Roboto','Liberation_Sans',sans-serif]">
      <div className="h-[24px] bg-[#eef2fb] border-b border-b-[#a8a8a8] flex items-center pl-[3px] text-[14.600px] text-[#222] shrink-0">
        <Svg w={14} h={16}><rect x="0" y="1" width="14" height="14" fill="#4a4a7a" /><path d="M1 4h6M1 7h12M1 10h8M1 13h12" stroke="#b8b8d8" /></Svg>
        <span className="ml-[6px]">LAB_Simulation_02_Part_III - Multisim - [LAB_Simulation_02_Part_III]</span>
        <div className="ml-auto flex items-center">
          <div className="w-[40px] flex justify-center"><div className="w-[9px] h-[1px] bg-black" /></div>
          <div className="w-[40px] flex justify-center"><Svg w={10} h={10}><path d="M3 1.500h5.500v6M1.500 3h5.500v6h-5.500z" fill="none" stroke="#000" /></Svg></div>
          <div className="w-[50px] flex justify-center"><Svg w={11} h={11}><path d="M1 1l9 9M10 1l-9 9" stroke="#000" /></Svg></div>
        </div>
      </div>
      <MenuBar />
      <div className="flex h-[31px] shrink-0"><TopTool1 /><TopTool2 /><ZoomTool /></div>
      <BottomTools />
      <div className="flex h-[714px] shrink-0">
        <LeftPanel />
        <CanvasWithScroll />
        <RightTools />
      </div>
      <DocTabs />
      <Spreadsheet />
      <Status />
      <Taskbar />
      {meters.map(([p, n, v]) => <Meter key={n} pos={p} name={n} value={v} />)}
    </div>
  );
}
